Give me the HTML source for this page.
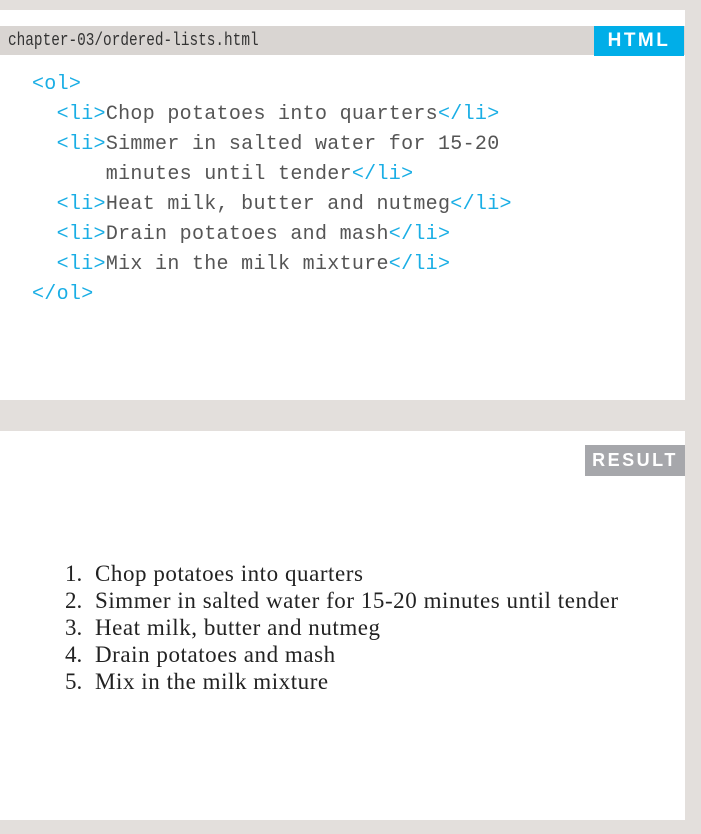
<!DOCTYPE html>
<html><head><style>
body{margin:0;width:701px;height:834px;background:#e3dfdc;position:relative;overflow:hidden}
.p{position:absolute;background:#fff;left:0;width:685px}
.code{position:absolute;font-family:"Liberation Mono",monospace;font-size:20px;letter-spacing:0.3px;color:#555;white-space:pre;left:0;line-height:30px}
.t{color:#1aaee5}
.r{position:absolute;font-family:"Liberation Serif",serif;font-size:23px;color:#222;white-space:pre;line-height:27px}
</style></head><body>
<div class="p" style="top:10px;height:390px"></div>
<div style="position:absolute;left:0;top:26px;width:685px;height:29px;background:#d9d5d2"></div>
<div style="position:absolute;left:8px;top:26px;line-height:30px;font-family:'Liberation Mono',monospace;font-size:18px;color:#333;transform:scaleX(0.8);transform-origin:left;white-space:pre">chapter-03/ordered-lists.html</div>
<div style="position:absolute;left:594px;top:26px;width:90px;height:30px;background:#00aee8;color:#fff;font:bold 19px/30px 'Liberation Sans',sans-serif;letter-spacing:2.5px;text-align:center">HTML</div>
<div class="code" style="top:70px;left:32px"><span class="t">&lt;ol&gt;</span>
  <span class="t">&lt;li&gt;</span>Chop potatoes into quarters<span class="t">&lt;/li&gt;</span>
  <span class="t">&lt;li&gt;</span>Simmer in salted water for 15-20
      minutes until tender<span class="t">&lt;/li&gt;</span>
  <span class="t">&lt;li&gt;</span>Heat milk, butter and nutmeg<span class="t">&lt;/li&gt;</span>
  <span class="t">&lt;li&gt;</span>Drain potatoes and mash<span class="t">&lt;/li&gt;</span>
  <span class="t">&lt;li&gt;</span>Mix in the milk mixture<span class="t">&lt;/li&gt;</span>
<span class="t">&lt;/ol&gt;</span></div>
<div class="p" style="top:431px;height:389px"></div>
<div style="position:absolute;left:585px;top:445px;width:100px;height:31px;background:#a6a7ab;color:#fff;font:bold 18px/31px 'Liberation Sans',sans-serif;letter-spacing:2.5px;text-align:center">RESULT</div>
<div class="r" style="left:65px;top:560px">1.
2.
3.
4.
5.</div>
<div class="r" style="left:95px;top:560px;letter-spacing:0.55px">Chop potatoes into quarters
Simmer in salted water for 15-20 minutes until tender
Heat milk, butter and nutmeg
Drain potatoes and mash
Mix in the milk mixture</div>
</body></html>
